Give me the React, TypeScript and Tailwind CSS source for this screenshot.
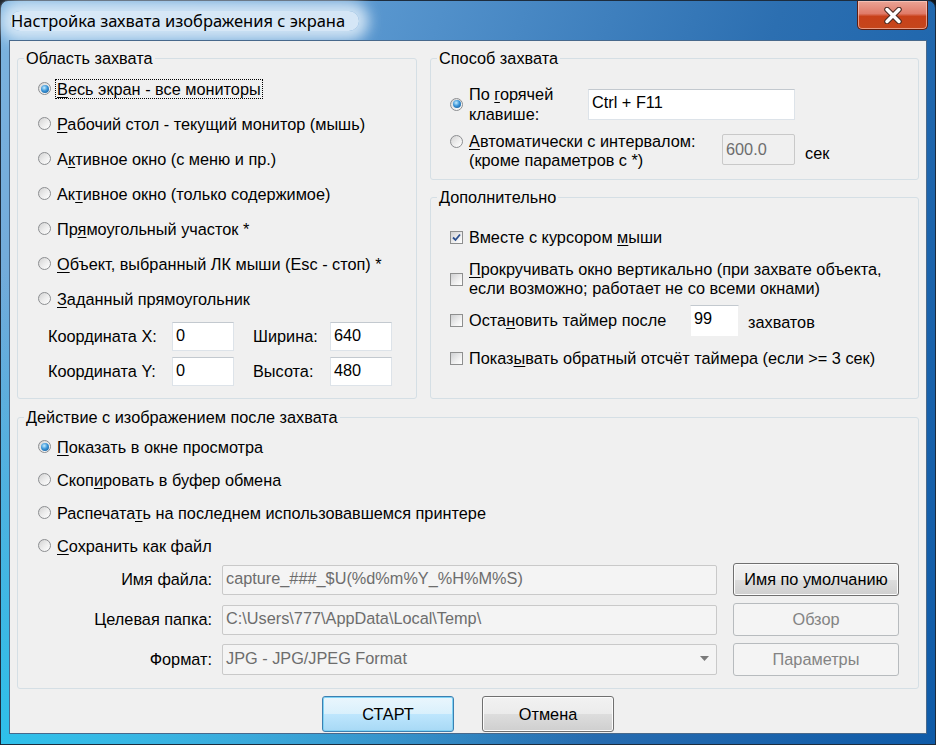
import React from 'react';

const Radio: React.FC<{ checked?: boolean }> = ({ checked }) => (
  <span className="flex h-[13px] w-[13px] shrink-0 items-center justify-center rounded-full border border-[#8c8e91] bg-[linear-gradient(135deg,#d2d2d2_0%,#ececec_50%,#ffffff_100%)]">
    {checked && (
      <span className="h-[8px] w-[8px] rounded-full bg-[radial-gradient(circle_at_40%_35%,#c4ecff_0%,#3a95d8_45%,#0f4f8c_100%)]" />
    )}
  </span>
);

const Check: React.FC<{ checked?: boolean }> = ({ checked }) => (
  <span className="flex h-[13px] w-[13px] shrink-0 items-center justify-center border border-[#8e8f8f] bg-[linear-gradient(135deg,#cfd0d2_0%,#f0f0f0_60%,#ffffff_100%)]">
    {checked && (
      <svg width="11" height="11" viewBox="0 0 11 11">
        <path d="M2 5.5 L4.5 8 L9 2.5" fill="none" stroke="#2b4f8f" strokeWidth="1.8" />
      </svg>
    )}
  </span>
);

const Group: React.FC<{ title: string; className?: string; children: React.ReactNode }> = ({ title, className, children }) => (
  <fieldset className={`rounded-[3px] border border-[#d5dfe5] ${className ?? ''}`}>
    <legend className="ml-[6px] px-[2px] leading-[18px]">{title}</legend>
    {children}
  </fieldset>
);

const RadioRow: React.FC<{ checked?: boolean; h: string; children: React.ReactNode }> = ({ checked, h, children }) => (
  <div className={`flex items-center gap-[6px] ${h}`}>
    <Radio checked={checked} />
    <span className="leading-[18px]">{children}</span>
  </div>
);

const U: React.FC<{ children: React.ReactNode }> = ({ children }) => (
  <span className="underline underline-offset-[2px]">{children}</span>
);

const TextBox: React.FC<{ value: string; className?: string }> = ({ value, className }) => (
  <div className={`flex items-start border border-[#dde3e9] border-t-[#c3c9cf] bg-white px-[3px] pt-[1px] leading-[22px] ${className ?? ''}`}>
    {value}
  </div>
);

const ButtonWin: React.FC<{ label: string; kind?: 'normal' | 'disabled' | 'default'; className?: string }> = ({
  label,
  kind = 'normal',
  className,
}) => {
  const styles = {
    normal:
      'border-[#707070] bg-[linear-gradient(#f2f2f2_0%,#ebebeb_50%,#dddddd_51%,#cfcfcf_100%)] shadow-[inset_0_0_0_1px_#fcfcfc] text-black',
    disabled: 'border-[#b7bbbe] bg-[#f4f4f4] text-[#838383]',
    default:
      'border-[#3c7fb1] bg-[linear-gradient(#eaf6fd_0%,#d9f0fc_50%,#bee6fd_51%,#a7d9f5_100%)] shadow-[inset_0_0_0_1px_#7fd3f5] text-black',
  };
  return (
    <div className={`flex items-center justify-center rounded-[3px] border ${styles[kind]} ${className ?? ''}`}>{label}</div>
  );
};

export default function App() {
  return (
    <div className="h-[745px] w-[936px] overflow-hidden bg-[#10161d]">
      <div className="flex h-full w-full flex-col rounded-t-[8px] border border-[#1d2c3d] bg-[radial-gradient(ellipse_at_0%_100%,#2ec0ea_0%,transparent_45%),linear-gradient(110deg,#7cb3df_0%,#5a98d0_30%,#2c6fb1_65%,#0f5ba8_100%)] px-[8px] pb-[10px]">
        {/* title bar */}
        <div className="flex h-[39px] items-start justify-between">
          <div className="ml-[1px] mt-[10px] rounded-[12px] bg-[rgba(226,238,249,0.9)] pl-[1px] pr-[14px] leading-[20px] shadow-[0_0_14px_10px_rgba(226,238,249,0.85)]">
            <span className="font-['Noto_Sans',sans-serif] text-[16.5px] text-black">Настройка захвата изображения с экрана</span>
          </div>
          <div className="mr-[-1px] flex h-[29px] w-[71px] items-center justify-center rounded-b-[5px] border border-t-0 border-[#5c1e12] bg-[linear-gradient(#eaa496_0%,#e07b69_45%,#c8411a_55%,#c5461c_100%)] shadow-[inset_0_0_0_1px_rgba(255,210,200,0.6)]">
            <svg width="22" height="17" viewBox="0 0 22 17">
              <path d="M5 2.5 L17 14.5 M17 2.5 L5 14.5" stroke="#4a2a22" strokeWidth="5.5" strokeLinecap="round" />
              <path d="M5 2.5 L17 14.5 M17 2.5 L5 14.5" stroke="#ffffff" strokeWidth="3.5" strokeLinecap="round" />
            </svg>
          </div>
        </div>

        {/* client area */}
        <div className="flex flex-1 flex-col border border-[#48698c] bg-[#f0f0f0] px-[7px] pt-[8px] font-['Liberation_Sans',Arial,sans-serif] text-[16.3px] text-black">
          <div className="flex gap-[13px]">
            <Group title="Область захвата" className="h-[350px] w-[400px]">
              <div className="flex flex-col pl-[20px] pt-[4px]">
                <div className="flex h-[35px] items-center gap-[5px]">
                  <Radio checked />
                  <span className="px-[1px] leading-[18px] outline-1 outline-dotted outline-black">
                    <U>В</U>есь экран - все мониторы
                  </span>
                </div>
                <RadioRow h="h-[35px]">
                  <U>Р</U>абочий стол - текущий монитор (мышь)
                </RadioRow>
                <RadioRow h="h-[35px]">
                  А<U>к</U>тивное окно (с меню и пр.)
                </RadioRow>
                <RadioRow h="h-[35px]">
                  Ак<U>т</U>ивное окно (только содержимое)
                </RadioRow>
                <RadioRow h="h-[35px]">
                  Пр<U>я</U>моугольный участок *
                </RadioRow>
                <RadioRow h="h-[35px]">
                  <U>О</U>бъект, выбранный ЛК мыши (Esc - стоп) *
                </RadioRow>
                <RadioRow h="h-[35px]">
                  <U>З</U>аданный прямоугольник
                </RadioRow>
              </div>
              <div className="mt-[6px] flex flex-col gap-[6px] pl-[30px]">
                <div className="flex items-center">
                  <span className="w-[124px]">Координата X:</span>
                  <TextBox value="0" className="h-[29px] w-[62px]" />
                  <span className="ml-[19px] w-[77px]">Ширина:</span>
                  <TextBox value="640" className="h-[29px] w-[62px]" />
                </div>
                <div className="flex items-center">
                  <span className="w-[124px]">Координата Y:</span>
                  <TextBox value="0" className="h-[29px] w-[62px]" />
                  <span className="ml-[19px] w-[77px]">Высота:</span>
                  <TextBox value="480" className="h-[29px] w-[62px] border-[#a9bdd6]" />
                </div>
              </div>
            </Group>

            <div className="flex flex-1 flex-col gap-[8px]">
              <Group title="Способ захвата" className="h-[131px]">
                <div className="pl-[19px] pt-[17px]">
                  <div className="flex h-[40px] items-center">
                    <Radio checked />
                    <div className="ml-[6px] w-[119px] leading-[20px]">
                      По <U>г</U>орячей
                      <br />
                      клавише:
                    </div>
                    <div className="flex h-[31px] w-[207px] items-center border border-[#dde3e9] border-t-[#c3c9cf] bg-white px-[3px] pb-[3px]">
                      Ctrl + F11
                    </div>
                  </div>
                  <div className="mt-[8px] flex items-start">
                    <div className="flex h-[19px] items-center">
                      <Radio />
                    </div>
                    <div className="ml-[6px] w-[253px] leading-[19px]">
                      <U>А</U>втоматически с интервалом:
                      <br />
                      (кроме параметров с *)
                    </div>
                    <div className="mt-[2px] flex h-[31px] w-[73px] items-start rounded-[2px] border border-[#c9c9c9] bg-[#f0f0f0] px-[3px] pt-[2px] text-[#6d6d6d]">
                      600.0
                    </div>
                    <span className="ml-[10px] mt-[9px]">сек</span>
                  </div>
                </div>
              </Group>

              <Group title="Дополнительно" className="h-[211px]">
                <div className="flex flex-col pl-[19px] pt-[19px]">
                  <div className="flex h-[24px] items-center gap-[6px]">
                    <Check checked />
                    <span>
                      Вместе с курсором <U>м</U>ыши
                    </span>
                  </div>
                  <div className="mt-[11px] flex items-center gap-[6px]">
                    <Check />
                    <span className="leading-[19px]">
                      <U>П</U>рокручивать окно вертикально (при захвате объекта,
                      <br />
                      если возможно; работает не со всеми окнами)
                    </span>
                  </div>
                  <div className="mt-[6px] flex h-[33px] items-center">
                    <Check />
                    <span className="ml-[6px] w-[221px]">
                      Оста<U>н</U>овить таймер после
                    </span>
                    <TextBox value="99" className="h-[32px] w-[49px] border-[#f0f0f0]" />
                    <span className="ml-[9px] mt-[3px]">захватов</span>
                  </div>
                  <div className="mt-[9px] flex h-[24px] items-center gap-[6px]">
                    <Check />
                    <span>
                      Показ<U>ы</U>вать обратный отсчёт таймера (если &gt;= 3 сек)
                    </span>
                  </div>
                </div>
              </Group>
            </div>
          </div>

          <Group title="Действие с изображением после захвата" className="mt-[9px] h-[281px]">
            <div className="flex flex-col pl-[20px] pt-[4px]">
              <RadioRow checked h="h-[33px]">
                <U>П</U>оказать в окне просмотра
              </RadioRow>
              <RadioRow h="h-[33px]">
                Скоп<U>и</U>ровать в буфер обмена
              </RadioRow>
              <RadioRow h="h-[33px]">
                Распечата<U>т</U>ь на последнем использовавшемся принтере
              </RadioRow>
              <RadioRow h="h-[33px]">
                <U>С</U>охранить как файл
              </RadioRow>
            </div>
            <div className="mt-[1px] flex flex-col gap-[7px]">
              <div className="flex h-[33px] items-center">
                <span className="w-[194px] text-right">Имя файла:</span>
                <div className="ml-[10px] flex h-[30px] w-[495px] items-center rounded-[2px] border border-[#c9c9c9] bg-[#f4f4f4] px-[3px] pb-[2px] text-[#6d6d6d]">
                  capture_###_$U(%d%m%Y_%H%M%S)
                </div>
                <ButtonWin label="Имя по умолчанию" className="ml-[16px] h-[33px] w-[166px]" />
              </div>
              <div className="flex h-[33px] items-center">
                <span className="w-[194px] text-right">Целевая папка:</span>
                <div className="ml-[10px] flex h-[30px] w-[495px] items-center rounded-[2px] border border-[#c9c9c9] bg-[#f4f4f4] px-[3px] pb-[2px] text-[#6d6d6d]">
                  C:\Users\777\AppData\Local\Temp\
                </div>
                <ButtonWin label="Обзор" kind="disabled" className="ml-[16px] h-[33px] w-[166px]" />
              </div>
              <div className="flex h-[33px] items-center">
                <span className="w-[194px] text-right">Формат:</span>
                <div className="ml-[10px] flex h-[31px] w-[495px] items-center justify-between rounded-[2px] border border-[#c9c9c9] bg-[#f4f4f4] pb-[2px] pl-[3px] pr-[7px] text-[#6d6d6d]">
                  <span>JPG - JPG/JPEG Format</span>
                  <svg width="9" height="5" viewBox="0 0 9 5">
                    <path d="M0 0 H9 L4.5 5 Z" fill="#7a7a7a" />
                  </svg>
                </div>
                <ButtonWin label="Параметры" kind="disabled" className="ml-[16px] h-[33px] w-[166px]" />
              </div>
            </div>
          </Group>

          <div className="mt-[7px] flex justify-center gap-[28px]">
            <ButtonWin label="СТАРТ" kind="default" className="h-[36px] w-[132px]" />
            <ButtonWin label="Отмена" className="h-[36px] w-[132px]" />
          </div>
        </div>
      </div>
    </div>
  );
}
